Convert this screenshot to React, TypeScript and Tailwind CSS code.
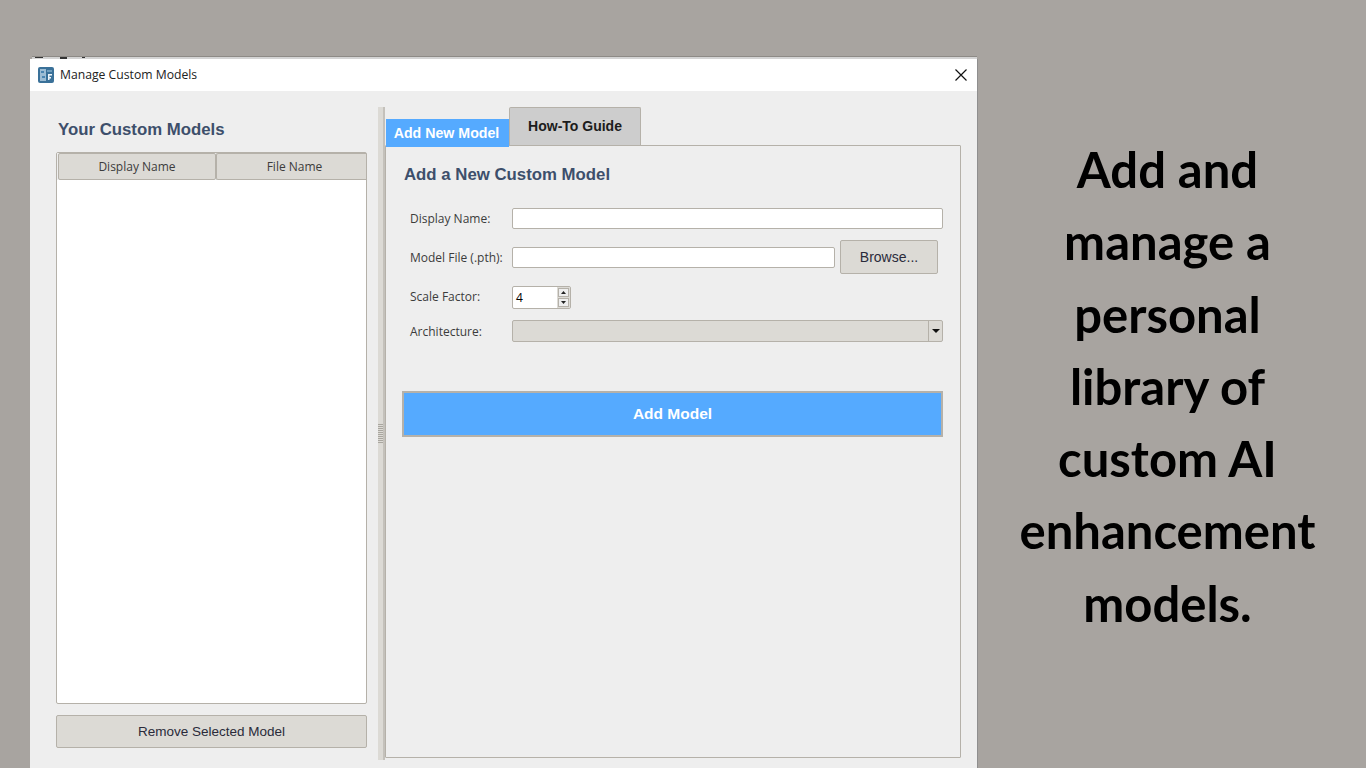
import React from "react";

const ui = "font-['Open_Sans','Noto_Sans',sans-serif]";
const arial = "font-['Liberation_Sans',Arial,sans-serif]";
const border = "border border-[#b5b1a9]";

function AppIcon() {
  return (
    <svg width="16" height="16" viewBox="0 0 16 16" className="shrink-0">
      <rect x="0" y="0" width="16" height="16" rx="2" fill="#3a7199" />
      <rect x="2" y="2" width="6" height="12" fill="#9dbdd4" />
      <rect x="3" y="4" width="3" height="2" fill="#4b86b2" />
      <rect x="4" y="9" width="3" height="2" fill="#4b86b2" />
      <rect x="9" y="3" width="5" height="2" fill="#6f9dbd" />
      <rect x="10" y="7" width="4" height="1.5" fill="#eef5fa" />
      <rect x="10" y="7" width="1.5" height="6" fill="#eef5fa" />
      <rect x="10" y="10" width="3" height="1.5" fill="#eef5fa" />
    </svg>
  );
}

function Label({ children, pt = "" }: { children: React.ReactNode; pt?: string }) {
  return <div className={`w-[109px] shrink-0 pl-[7px] ${pt} text-[12px] leading-4 text-[#3c3c3c] ${ui}`}>{children}</div>;
}

export default function App() {
  return (
    <div className="h-[768px] w-[1366px] overflow-hidden bg-[#a8a4a0] flex pl-[30px] pt-[56px]">
      <div className="w-[948px] shrink-0 flex flex-col">
        <div className="h-[3px] ml-[2px] mr-[1px] bg-[#d4d4d4] border-t border-[#8d8a86] flex items-start">
          <div className="ml-[3px] w-[8px] h-[1px] bg-[#333333]" />
          <div className="ml-[17px] w-[7px] h-[2px] bg-[#333333]" />
          <div className="ml-[15px] w-[3px] h-[1px] bg-[#333333]" />
        </div>
        <div className="flex-1 bg-[#eeeeee] border-r border-[#8f8f8f] flex flex-col min-h-0">
          <div className="h-[32px] bg-white flex items-center pl-[8px] pr-[9px] shrink-0">
            <AppIcon />
            <span className={`ml-[6px] text-[12.2px] text-[#222222] ${ui}`}>Manage Custom Models</span>
            <svg width="14" height="14" viewBox="0 0 14 14" className="ml-auto">
              <path d="M1.5 1.5 L12.5 12.5 M12.5 1.5 L1.5 12.5" stroke="#111111" strokeWidth="1.2" />
            </svg>
          </div>
          <div className="flex-1 flex min-h-0 pl-[26px] pt-[16px]">
            {/* Left column */}
            <div className="w-[311px] shrink-0 flex flex-col pt-[12px]">
              <div className={`pl-[2px] h-[22px] text-[16.8px] leading-[22px] font-bold text-[#3d4f6b] ${arial}`}>Your Custom Models</div>
              <div className={`mt-[11px] h-[552px] bg-white ${border} rounded-[2px] flex flex-col`}>
                <div className="flex h-[27px] pl-[1px] shrink-0 bg-[#eeeeee]">
                  <div className={`w-[158px] bg-[#dcdad5] ${border} rounded-[2px] flex items-center justify-center text-[12px] text-[#3c3c3c] ${ui}`}>Display Name</div>
                  <div className={`flex-1 bg-[#dcdad5] ${border} border-r-0 rounded-l-[2px] pl-[6px] flex items-center justify-center text-[12px] text-[#3c3c3c] ${ui}`}>File Name</div>
                </div>
              </div>
              <button className={`mt-[11px] h-[33px] w-full bg-[#dcdad5] ${border} rounded-[2px] pt-[2px] text-[13.5px] text-[#2a2a3a] ${arial}`}>Remove Selected Model</button>
            </div>
            {/* Splitter */}
            <div className="ml-[11px] w-[7px] h-[653px] shrink-0 bg-[#dcdad5] border-r-2 border-[#c4c1bb] flex flex-col items-center justify-center gap-[1px] pr-[1px]">
              {[0, 1, 2, 3, 4, 5, 6, 7, 8, 9].map((i) => (
                <div key={i} className="h-[1px] w-[5px] bg-[#a9a69f]" />
              ))}
            </div>
            {/* Right column */}
            <div className="w-[576px] shrink-0 flex flex-col">
              <div className="h-[38px] flex items-end relative z-10 pl-[1px] shrink-0">
                <div className={`w-[123px] h-[28px] -mb-[2px] pt-[2px] pr-[2px] bg-[#55aaff] flex items-center justify-center text-white text-[14.2px] font-bold ${arial}`}>Add New Model</div>
                <div className={`w-[132px] h-[38px] bg-[#cdcdcd] ${border} border-b-0 rounded-t-[2px] flex items-center justify-center text-[#1c1c1c] text-[14px] font-bold ${arial}`}>How-To Guide</div>
              </div>
              <div className={`h-[613px] ${border} rounded-[1px] px-[17px] pt-[19px] flex flex-col`}>
                <div className={`pl-[1px] h-[20px] text-[16.8px] leading-[20px] font-bold text-[#3d4f6b] ${arial}`}>Add a New Custom Model</div>
                <div className="mt-[23px] flex items-center h-[21px]">
                  <Label pt="pt-[1px]">Display Name:</Label>
                  <div className={`w-[431px] h-[21px] bg-white ${border} rounded-[2px]`} />
                </div>
                <div className="mt-[11px] flex items-center h-[34px]">
                  <Label pt="pt-[1px]">Model File (.pth):</Label>
                  <div className={`w-[323px] h-[21px] bg-white ${border} rounded-[2px]`} />
                  <button className={`ml-[5px] w-[98px] h-[34px] bg-[#dcdad5] ${border} rounded-[2px] text-[14px] text-[#2a2a3a] ${arial}`}>Browse...</button>
                </div>
                <div className="mt-[12px] flex items-center h-[23px]">
                  <div className="-mt-[1px]"><Label>Scale Factor:</Label></div>
                  <div className={`w-[59px] h-[23px] bg-white ${border} rounded-[2px] flex items-center justify-between pl-[3px]`}>
                    <span className={`text-[12px] text-black ${ui}`}>4</span>
                    <div className="w-[13px] h-full bg-[#dcdad5] flex flex-col items-center justify-center gap-[1px] px-[1px]">
                      <div className="w-full h-[9px] bg-[#eeeeee] border border-[#b5b1a9] flex items-center justify-center">
                        <svg width="5" height="3" viewBox="0 0 5 3"><path d="M2.5 0 L5 3 H0 Z" fill="#222" /></svg>
                      </div>
                      <div className="w-full h-[9px] bg-[#eeeeee] border border-[#b5b1a9] flex items-center justify-center">
                        <svg width="5" height="3" viewBox="0 0 5 3"><path d="M0 0 H5 L2.5 3 Z" fill="#222" /></svg>
                      </div>
                    </div>
                  </div>
                </div>
                <div className="mt-[11px] flex items-center h-[22px]">
                  <Label pt="pt-[1px]">Architecture:</Label>
                  <div className={`w-[431px] h-[22px] bg-[#dcdad5] ${border} rounded-[2px] flex justify-end`}>
                    <div className="w-[14px] h-full border-l border-[#b5b1a9] flex items-center justify-center">
                      <svg width="8" height="4" viewBox="0 0 8 4"><path d="M0 0 H8 L4 4 Z" fill="#111" /></svg>
                    </div>
                  </div>
                </div>
                <button className={`mt-[49px] ml-[-1px] w-[541px] h-[46px] bg-[#55aaff] border-2 border-[#b5b1a9] text-white text-[15.5px] font-bold ${arial}`}>Add Model</button>
              </div>
            </div>
          </div>
        </div>
      </div>
      <div className="w-[379px] shrink-0 pt-[77px] flex flex-col items-center text-center">
        <div className={`text-[49px] leading-[72.3px] font-bold text-black font-['Lato','Open_Sans',sans-serif]`}>
          <div>Add and</div>
          <div>manage a</div>
          <div>personal</div>
          <div>library of</div>
          <div>custom AI</div>
          <div>enhancement</div>
          <div>models.</div>
        </div>
      </div>
    </div>
  );
}
